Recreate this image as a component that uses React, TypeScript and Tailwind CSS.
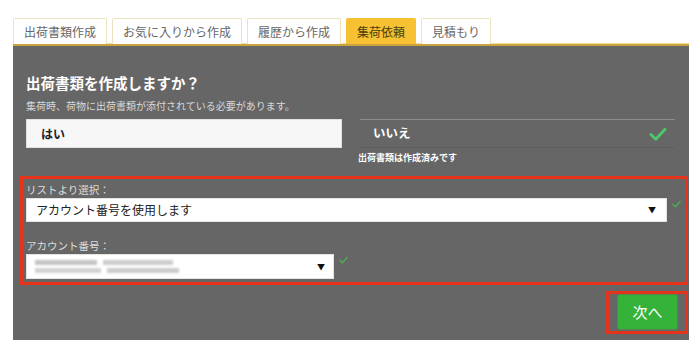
import React from 'react';

const tabs = ['出荷書類作成', 'お気に入りから作成', '履歴から作成', '集荷依頼', '見積もり'];

const Check = ({ className }: { className: string }) => (
  <svg viewBox="0 0 20 16" className={className}>
    <path d="M2 8.5 L7.5 14 L18 2.5" fill="none" stroke="currentColor" strokeWidth="3.2" strokeLinecap="round" strokeLinejoin="round" />
  </svg>
);

const App = () => {
  return (
    <div
      className="w-[700px] h-[352px] bg-white pt-[18px] pl-[13px] overflow-hidden"
      style={{ fontFamily: '"Noto Sans CJK JP", "Noto Sans", sans-serif' }}
    >
      <div className="flex gap-[5px] h-[26px]">
        {tabs.map((t, i) => (
          <div
            key={t}
            className={
              i === 3
                ? 'px-[10px] flex items-center text-[12px] rounded-t-[2px] bg-[#f6c233] text-[#4a3d10] border border-[#f6c233] border-b-0'
                : 'px-[10px] flex items-center text-[12px] rounded-t-[2px] bg-white text-[#666] border border-[#ede2bd] border-b-0'
            }
          >
            {t}
          </div>
        ))}
      </div>

      <div className="w-[676px] h-[296px] bg-[#666] border-t-[2px] border-[#c9a43f] shadow-[0_-1px_0_#f3dc94]">
        <div className="pl-[13px] pt-[27px]">
          <h1 className="text-white font-bold text-[14.5px] leading-[20px]">出荷書類を作成しますか？</h1>
          <p className="text-[#d8d8d8] text-[10px] leading-[14px] mt-[6px]">集荷時、荷物に出荷書類が添付されている必要があります。</p>

          <div className="flex gap-[18px] mt-[6px]">
            <div className="w-[316px] h-[29px] bg-[#f7f7f7] border border-[#e2e2e2] flex items-center pl-[14px] text-[12px] font-bold text-[#222]">
              はい
            </div>
            <div className="w-[315px]">
              <div className="h-[29px] border-t border-[#8c8c8c] border-b border-b-[#5e5e5e] flex items-center justify-between pl-[13px] pr-[8px]">
                <span className="text-white font-bold text-[12.5px]">いいえ</span>
                <Check className="w-[18px] h-[14px] text-[#4cc86b]" />
              </div>
              <div className="text-white font-bold text-[9px] leading-[12px] mt-[4px] -ml-[2px]">出荷書類は作成済みです</div>
            </div>
          </div>
        </div>

        <div className="ml-[7px] mt-[12px] w-[668px] h-[109px] border-[3px] border-[#e5321b] pl-[3px] pt-[4px]">
          <div className="text-[#dcdcdc] text-[10.5px] leading-[14px]">リストより選択：</div>
          <div className="flex items-start gap-[5px] mt-[1px]">
            <div className="w-[641px] h-[24px] bg-white border border-[#e4e4e4] flex items-center justify-between pl-[9px] pr-[10px]">
              <span className="text-[12px] text-[#222]">アカウント番号を使用します</span>
              <span className="text-[8px] text-[#111]">▼</span>
            </div>
            <Check className="w-[9px] h-[8px] mt-[2px] text-[#4caf50]" />
          </div>

          <div className="text-[#dcdcdc] text-[10.5px] leading-[14px] mt-[17px]">アカウント番号：</div>
          <div className="flex items-start gap-[5px] mt-[1px]">
            <div className="w-[308px] h-[25px] bg-white border border-[#e4e4e4] flex items-center justify-between pl-[8px] pr-[8px]">
              <div className="flex flex-col gap-[3px] blur-[0.8px]">
                <div className="flex gap-[6px]">
                  <div className="w-[62px] h-[5px] bg-[#c4c4c4]" />
                  <div className="w-[70px] h-[5px] bg-[#cdcdcd]" />
                </div>
                <div className="flex gap-[6px]">
                  <div className="w-[66px] h-[5px] bg-[#d2d2d2]" />
                  <div className="w-[72px] h-[5px] bg-[#cbcbcb]" />
                </div>
              </div>
              <span className="text-[8px] text-[#111]">▼</span>
            </div>
            <Check className="w-[9px] h-[8px] mt-[2px] text-[#4caf50]" />
          </div>
        </div>

        <div className="flex justify-end mt-[6px] pr-[1px]">
          <div className="w-[82px] h-[43px] border-[3px] border-[#e5321b] pl-[9px] pt-[1px]">
            <button className="w-[59px] h-[34px] bg-[#35b23a] rounded-[2px] text-white text-[15px] shadow-[0_0_0_1px_#4e8a4f]">
              次へ
            </button>
          </div>
        </div>
      </div>
    </div>
  );
};

export default App;
